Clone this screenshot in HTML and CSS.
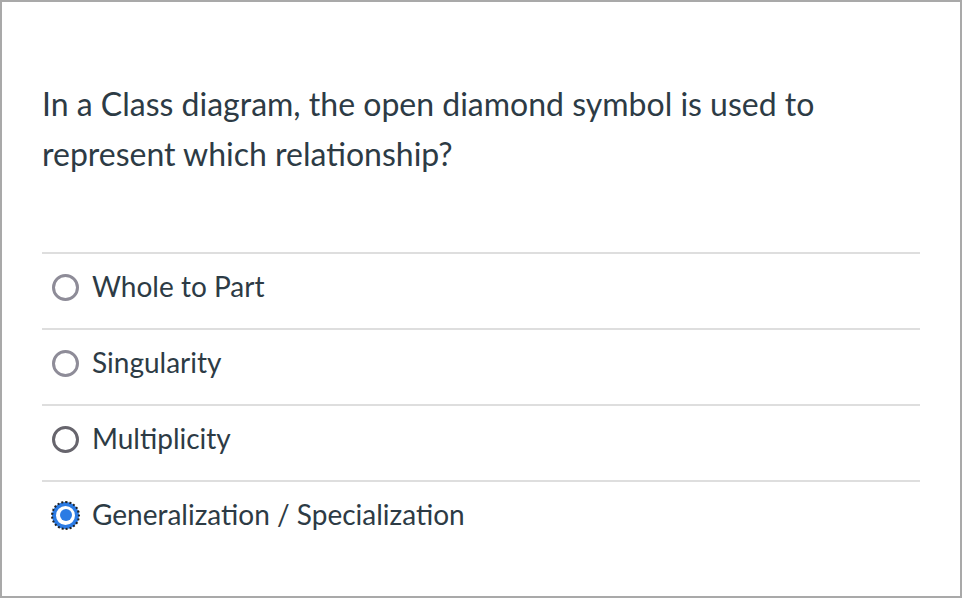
FILE: index.html
```html
<!DOCTYPE html>
<html>
<head>
<meta charset="utf-8">
<link rel="stylesheet" href="styles.css">
</head>
<body>
<div class="frame">
  <div class="question">In a Class diagram, the open diamond symbol is used to represent which relationship?</div>
  <div class="answers">
    <label class="answer"><span class="radio"></span><span class="text">Whole to Part</span></label>
    <label class="answer"><span class="radio"></span><span class="text">Singularity</span></label>
    <label class="answer"><span class="radio hover"></span><span class="text">Multiplicity</span></label>
    <label class="answer"><span class="radio checked"></span><span class="text">Generalization / Specialization</span></label>
  </div>
</div>
</body>
</html>
```
FILE: styles.css
```css
html, body {
  margin: 0;
  padding: 0;
  background: #fff;
}
.frame {
  box-sizing: border-box;
  width: 962px;
  height: 598px;
  border: 2px solid #a9a9a9;
  padding: 77px 40px 0 40px;
  font-family: Lato, "Open Sans", sans-serif;
  color: #2d3b45;
}
.question {
  font-size: 32px;
  line-height: 50px;
  padding-right: 40px;
}
.answers {
  margin-top: 73px;
}
.answer {
  box-sizing: border-box;
  display: flex;
  align-items: center;
  height: 76px;
  padding-bottom: 10px;
  border-top: 2px solid #dedede;
  gap: 13px;
  padding-left: 10px;
}
.text {
  font-size: 28px;
}
.radio {
  box-sizing: border-box;
  width: 27px;
  height: 27px;
  margin-top: 2px;
  border-radius: 50%;
  border: 3.5px solid #8e8c98;
  position: relative;
}
.radio.hover {
  border-color: #67656d;
}
.radio.checked {
  border: 4px solid #2b7be4;
  outline: 2px dotted #222;
  outline-offset: -1px;
}
.radio.checked::after {
  content: "";
  position: absolute;
  left: 3.5px;
  top: 3.5px;
  width: 12px;
  height: 12px;
  border-radius: 50%;
  background: #2b7be4;
}
```
